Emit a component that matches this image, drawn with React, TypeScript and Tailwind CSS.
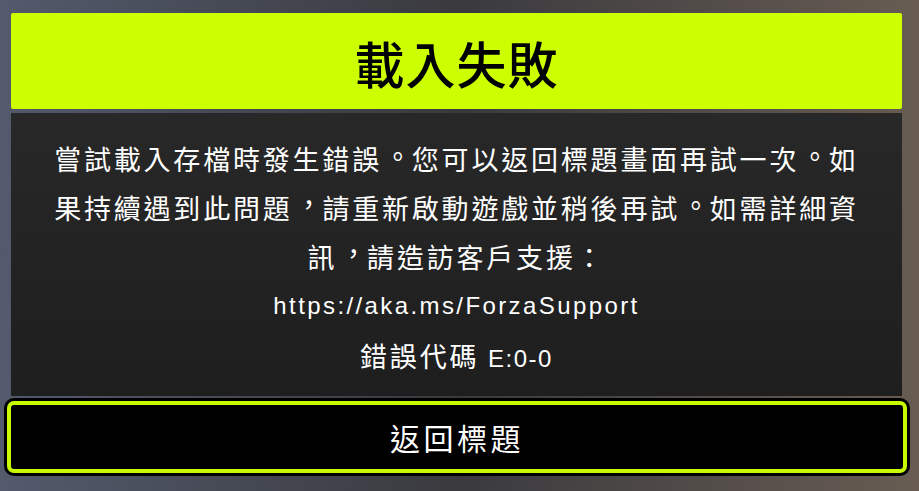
// Full-width punctuation nudged towards the centre of its em box, Traditional Chinese style
function Stop() {
  return <span className="relative -top-[0.12em] left-[0.08em]">。</span>;
}

function Comma() {
  return <span className="relative -top-[0.14em] left-[0.1em]">，</span>;
}

export default function App() {
  return (
    <div
      lang="zh-Hant-TW"
      className="relative h-[491px] w-[919px] overflow-hidden bg-gradient-to-r from-[#525a6c] via-[#3a3a3e] to-[#685c52] font-['Noto_Sans_CJK_TC','Noto_Sans',sans-serif]"
    >
      <div className="flex h-full flex-col pt-[13px]">
        {/* Title bar */}
        <div className="ml-[11px] flex h-[96px] w-[891px] items-center justify-center rounded-[2px] bg-[#ccff00]">
          <h1 className="pt-[2px] text-[50px] font-medium leading-none tracking-[1px] text-black">載入失敗</h1>
        </div>

        {/* Message panel */}
        <div className="ml-[11px] mt-[4px] flex h-[283px] w-[891px] flex-col items-center bg-gradient-to-b from-[#282828] to-[#1e1e1e] pt-[21px] text-center text-white">
          <p className="text-[27px] leading-[49px] tracking-[2.8px]">
            嘗試載入存檔時發生錯誤<Stop />您可以返回標題畫面再試一次<Stop />如
            <br />
            果持續遇到此問題<Comma />請重新啟動遊戲並稍後再試<Stop />如需詳細資
            <br />
            訊<Comma />請造訪客戶支援：
          </p>
          <p className="font-['Liberation_Sans',sans-serif] text-[24px] leading-[50px] tracking-[2.4px]">
            https://aka.ms/ForzaSupport
          </p>
          <p className="text-[27px] leading-[50px] tracking-[2.8px]">
            錯誤代碼 <span className="font-['Liberation_Sans',sans-serif] text-[24px] tracking-[1.5px]">E:0-0</span>
          </p>
        </div>

        {/* Back button */}
        <div className="ml-[4px] mt-[2px] w-[906px] rounded-[10px] bg-black p-[3px]">
          <button className="flex h-[72px] w-full items-center justify-center rounded-[7px] border-[4px] border-[#c8fa00] bg-black text-[30px] tracking-[3.5px] text-white">
            返回標題
          </button>
        </div>
      </div>
    </div>
  );
}
